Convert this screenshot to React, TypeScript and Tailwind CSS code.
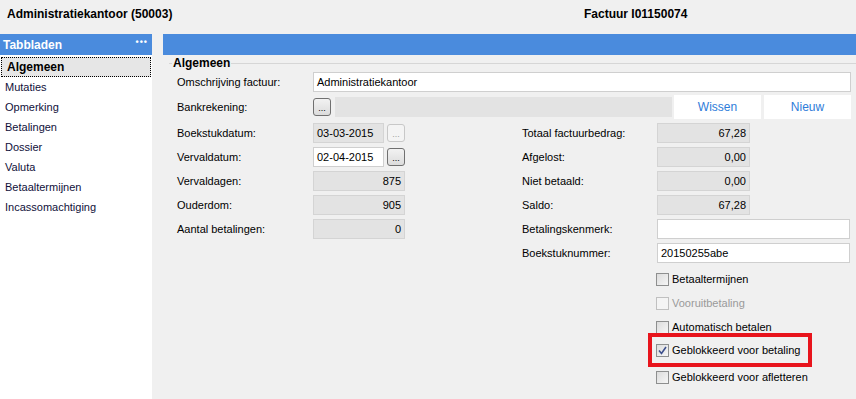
import React from 'react';

const font = { fontFamily: '"Liberation Sans", Arial, sans-serif' };

const tabs = ['Algemeen', 'Mutaties', 'Opmerking', 'Betalingen', 'Dossier', 'Valuta', 'Betaaltermijnen', 'Incassomachtiging'];

const DotsButton = ({ disabled = false }: { disabled?: boolean }) => (
  <div
    className={`w-[18px] h-[18px] rounded-[3px] border flex items-end justify-center pb-[2px] text-[9px] leading-none ${
      disabled ? 'border-[#c8c8c8] bg-[#f4f4f4] text-[#a0a0a0]' : 'border-[#707070] bg-gradient-to-b from-[#f2f2f2] to-[#dcdcdc] text-black'
    }`}
  >
    ...
  </div>
);

const Field = ({ value = '', gray = false, right = false, w }: { value?: string; gray?: boolean; right?: boolean; w: string }) => (
  <div
    className={`${w} h-[20px] border flex items-center px-[3px] text-[11px] ${
      gray ? 'bg-[#e3e3e3] border-[#d4d4d4]' : 'bg-white border-[#cfcfcf]'
    } ${right ? 'justify-end' : ''}`}
  >
    {value}
  </div>
);

const Row = ({ label, children, lw = 'w-[136px]' }: { label: string; children: React.ReactNode; lw?: string }) => (
  <div className="h-[24px] flex items-center">
    <div className={`${lw} text-[11px]`}>{label}</div>
    {children}
  </div>
);

const Check = ({ label, checked = false, disabled = false }: { label: string; checked?: boolean; disabled?: boolean }) => (
  <div className="h-[24px] flex items-center gap-[3px]">
    <div
      className={`w-[13px] h-[13px] border flex items-center justify-center ${
        disabled ? 'border-[#c0c0c0] bg-[#f4f4f4]' : 'border-[#8e8f8f] bg-gradient-to-br from-[#dcdcdc] to-[#f6f6f6]'
      }`}
    >
      {checked && (
        <svg width="9" height="9" viewBox="0 0 9 9">
          <path d="M1 4.5 L3.5 7.5 L8 1" fill="none" stroke="#3c4f8c" strokeWidth="1.6" />
        </svg>
      )}
    </div>
    <span className={`text-[11px] ${disabled ? 'text-[#9a9a9a]' : 'text-black'}`}>{label}</span>
  </div>
);

export default function App() {
  return (
    <div className="w-[856px] h-[399px] bg-[#f0f0f0] flex flex-col overflow-hidden text-black" style={font}>
      <div className="h-[34px] flex items-start pt-[5px] text-[12px] font-bold">
        <span className="w-[584px] pl-[7px]">Administratiekantoor (50003)</span>
        <span>Factuur I01150074</span>
      </div>
      <div className="flex flex-1">
        <div className="w-[152px] bg-white flex flex-col">
          <div className="h-[21px] bg-[#4a8bdd] flex items-center justify-between pl-[3px] pr-[4px] text-white text-[12px] font-bold">
            <span>Tabbladen</span>
            <span className="tracking-[1px] text-[9px] leading-none -mt-[4px]">•••</span>
          </div>
          <div className="flex flex-col pt-[2px]">
            {tabs.map((t, i) => (
              <div
                key={t}
                className={`h-[20px] flex items-center pl-[5px] text-[11px] ${
                  i === 0 ? 'bg-[#e6e6e6] border border-dotted border-black mx-[1px] pl-[4px] font-bold text-[12px]' : 'text-[#10103a]'
                }`}
              >
                {t}
              </div>
            ))}
          </div>
        </div>
        <div className="flex-1 ml-[11px] flex flex-col">
          <div className="h-[21px] bg-[#4a8bdd]" />
          <div className="ml-[6px] flex items-center h-[14px] mt-[1px]">
            <div className="w-[3px] border-t border-[#d6d6d6]" />
            <span className="px-[1px] text-[12px] font-bold">Algemeen</span>
            <div className="flex-1 border-t border-[#d6d6d6]" />
          </div>
          <div className="pl-[14px] pr-[5px] flex flex-col">
            <Row label="Omschrijving factuur:">
              <Field w="flex-1" value="Administratiekantoor" />
            </Row>
            <div className="h-[24px] flex items-center mt-[1px]">
              <div className="w-[136px] text-[11px]">Bankrekening:</div>
              <DotsButton />
              <div className="w-[337px] h-[20px] bg-[#e3e3e3] ml-[4px]" />
              <div className="w-[87px] h-[24px] bg-white ml-[2px] flex items-center justify-center text-[12px] text-[#2e7cd9]">Wissen</div>
              <div className="w-[87px] h-[24px] bg-white ml-[3px] flex items-center justify-center text-[12px] text-[#2e7cd9]">Nieuw</div>
            </div>
            <div className="flex mt-[2px]">
              <div className="w-[345px] flex flex-col">
                <Row label="Boekstukdatum:">
                  <Field w="w-[71px]" gray value="03-03-2015" />
                  <div className="ml-[3px]"><DotsButton disabled /></div>
                </Row>
                <Row label="Vervaldatum:">
                  <Field w="w-[71px]" value="02-04-2015" />
                  <div className="ml-[3px]"><DotsButton /></div>
                </Row>
                <Row label="Vervaldagen:">
                  <Field w="w-[92px]" gray right value="875" />
                </Row>
                <Row label="Ouderdom:">
                  <Field w="w-[92px]" gray right value="905" />
                </Row>
                <Row label="Aantal betalingen:">
                  <Field w="w-[92px]" gray right value="0" />
                </Row>
              </div>
              <div className="flex-1 flex flex-col">
                <Row label="Totaal factuurbedrag:" lw="w-[135px]">
                  <Field w="w-[93px]" gray right value="67,28" />
                </Row>
                <Row label="Afgelost:" lw="w-[135px]">
                  <Field w="w-[93px]" gray right value="0,00" />
                </Row>
                <Row label="Niet betaald:" lw="w-[135px]">
                  <Field w="w-[93px]" gray right value="0,00" />
                </Row>
                <Row label="Saldo:" lw="w-[135px]">
                  <Field w="w-[93px]" gray right value="67,28" />
                </Row>
                <Row label="Betalingskenmerk:" lw="w-[135px]">
                  <Field w="w-[193px]" />
                </Row>
                <Row label="Boekstuknummer:" lw="w-[135px]">
                  <Field w="w-[193px]" value="20150255abe" />
                </Row>
                <div className="pl-[134px] mt-[2px] flex flex-col">
                  <Check label="Betaaltermijnen" />
                  <Check label="Vooruitbetaling" disabled />
                  <Check label="Automatisch betalen" />
                  <div className="-ml-[8px] w-[164px] h-[34px] -mt-[6px] -mb-[2px] border-[4px] border-[#e8141c] pl-[4px] flex items-center">
                    <Check label="Geblokkeerd voor betaling" checked />
                  </div>
                  <Check label="Geblokkeerd voor afletteren" />
                </div>
              </div>
            </div>
          </div>
        </div>
      </div>
    </div>
  );
}
